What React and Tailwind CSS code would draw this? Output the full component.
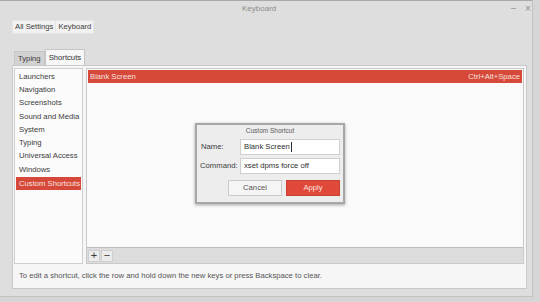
import React from "react";

const categories = [
  "Launchers",
  "Navigation",
  "Screenshots",
  "Sound and Media",
  "System",
  "Typing",
  "Universal Access",
  "Windows",
];

export default function App() {
  return (
    <div
      className="relative w-[540px] h-[302px] overflow-hidden bg-[#d6d6d6] text-[#3c3c3c] whitespace-nowrap"
      style={{ fontFamily: '"Liberation Sans", Arial, sans-serif' }}
    >
      {/* window */}
      <div className="w-[533px] h-[297px] bg-[#dedede] border-r border-b border-[#c2c2c2] border-t border-t-[#a9a9a9] flex flex-col">
        {/* title bar */}
        <div className="relative h-[19px] shrink-0">
          <div className="absolute left-[242px] top-[2px] text-[8px] text-[#8c8c8c]">Keyboard</div>
          <div className="absolute left-[511px] top-[1px] text-[9px] text-[#8c8c8c]">–</div>
          <div className="absolute left-[525px] top-[0px] text-[10px] text-[#8c8c8c]">×</div>
        </div>

        {/* path bar */}
        <div className="flex ml-[12px] h-[14px] text-[7.7px]">
          <div className="px-[2px] flex items-center bg-[#f2f2f2] border border-[#e4e4e4]">All Settings</div>
          <div className="px-[2px] flex items-center bg-[#f2f2f2] border border-[#e4e4e4] border-l-0">Keyboard</div>
        </div>

        {/* tabs */}
        <div className="flex items-end ml-[14px] mt-[15px] h-[16px] text-[7.7px]">
          <div className="h-[14px] px-[3px] flex items-center bg-[#d2d2d2] border border-[#c6c6c6] border-b-0">Typing</div>
          <div className="h-[16px] px-[3px] flex items-center bg-[#f7f7f7] border border-[#c6c6c6] border-b-0 text-[#2e2e2e]">Shortcuts</div>
        </div>

        {/* content panel */}
        <div className="ml-[12px] w-[515px] h-[224px] bg-[#f6f6f6] border border-[#c9c9c9] flex flex-col text-[7.7px]">
          <div className="flex gap-[3px] pl-[1px] pt-[2px] pr-[2px] h-[198px]">
            {/* categories */}
            <div className="w-[69px] h-full bg-[#fbfbfb] border border-[#cfcfcf] pt-[1px] pl-[1px] pr-[1px] overflow-hidden">
              {categories.map((c) => (
                <div key={c} className="h-[13.25px] flex items-center pl-[3px]">
                  {c}
                </div>
              ))}
              <div className="mt-[1px] h-[13px] flex items-center pl-[3px] bg-[#d6493a] text-[#f6e3df]">
                Custom Shortcuts
              </div>
            </div>

            {/* shortcuts list */}
            <div className="flex-1 h-full flex flex-col border border-[#c9c9c9] bg-[#fafafa]">
              <div className="flex-1 pt-[1px] px-[1px]">
                <div className="h-[13px] flex items-center justify-between px-[2px] bg-[#d6493a] text-[#f6e3df]">
                  <span>Blank Screen</span>
                  <span>Ctrl+Alt+Space</span>
                </div>
              </div>
              <div className="h-[16px] shrink-0 bg-[#dcdcdc] border-t border-[#bdbdbd] flex items-center pl-[1px] gap-[1px]">
                <div className="w-[12px] h-[12px] flex items-center justify-center bg-[#ececec] border border-[#cfcfcf] text-[11px] leading-none text-[#3a3a3a]">+</div>
                <div className="w-[12px] h-[12px] flex items-center justify-center bg-[#ececec] border border-[#cfcfcf] text-[11px] leading-none text-[#3a3a3a]">−</div>
              </div>
            </div>
          </div>
          <div className="flex-1 flex items-center pl-[6px] text-[#555]">
            To edit a shortcut, click the row and hold down the new keys or press Backspace to clear.
          </div>
        </div>
      </div>

      {/* Custom Shortcut dialog */}
      <div className="absolute left-[195px] top-[123px] w-[150px] h-[81px] bg-[#ededed] border-2 border-[#a7a7a7] shadow-[0_1px_3px_rgba(0,0,0,0.35)] flex flex-col text-[7.7px]">
        <div className="h-[12px] flex items-center justify-center text-[6.5px] text-[#5a5a5a]">Custom Shortcut</div>
        <div className="mt-[2px] flex items-center h-[16px] pl-[4px]">
          <div className="w-[39px]">Name:</div>
          <div className="w-[100px] h-[16px] bg-white border border-[#cfcfcf] flex items-center pl-[3px] text-[#2e2e2e]">
            Blank Screen<span className="ml-[1px] w-[1px] h-[10px] bg-[#2e2e2e]" />
          </div>
        </div>
        <div className="mt-[3px] flex items-center h-[16px] pl-[3px]">
          <div className="w-[40px]">Command:</div>
          <div className="w-[100px] h-[16px] bg-white border border-[#cfcfcf] flex items-center pl-[3px] text-[#2e2e2e]">
            xset dpms force off
          </div>
        </div>
        <div className="mt-[6px] flex justify-end gap-[4px] pr-[3px]">
          <div className="w-[54px] h-[16px] flex items-center justify-center bg-[#f5f5f5] border border-[#cbcbcb] text-[#555]">Cancel</div>
          <div className="w-[54px] h-[16px] flex items-center justify-center bg-[#e0493a] border border-[#c9402f] text-[#fbe4df]">Apply</div>
        </div>
      </div>
    </div>
  );
}
